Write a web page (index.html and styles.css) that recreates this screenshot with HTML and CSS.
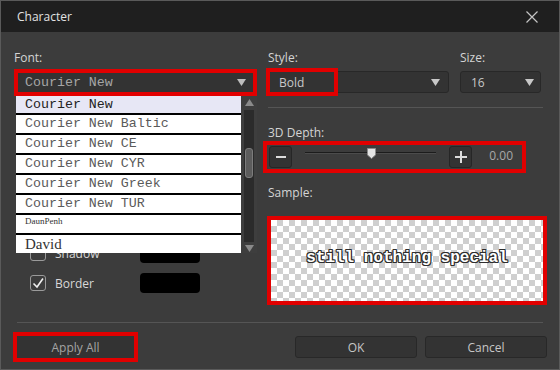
FILE: index.html
```html
<!DOCTYPE html>
<html lang="en">
  <head>
    <meta charset="UTF-8" />
    <meta name="viewport" content="width=device-width, initial-scale=1.0" />
    <title>Character</title>
    <link rel="stylesheet" href="styles.css">
  </head>
  <body>
    <div class="window">
      <div class="titlebar">
        <span class="title">Character</span>
        <svg class="close" width="12" height="12" viewBox="0 0 12 12">
          <path d="M0.5 0.5L11.5 11.5M11.5 0.5L0.5 11.5" stroke="#c4c4c4" stroke-width="1.2" fill="none" />
        </svg>
      </div>

      <div class="content">
        <div class="columns">
          <div class="col-left">
            <div class="label">Font:</div>
            <div class="font-field">
              <div class="combo combo-font">
                <span>Courier New</span>
                <svg class="arrow" width="9" height="7" viewBox="0 0 9 7"><polygon points="0,0 9,0 4.5,7" fill="#bdbdbd" /></svg>
              </div>
              <div class="font-list">
                <div class="items">
                  <div class="item selected">Courier New</div>
                  <div class="item">Courier New Baltic</div>
                  <div class="item">Courier New CE</div>
                  <div class="item">Courier New CYR</div>
                  <div class="item">Courier New Greek</div>
                  <div class="item">Courier New TUR</div>
                  <div class="item item-daun">DaunPenh</div>
                  <div class="item item-david">David</div>
                </div>
                <div class="scrollbar">
                  <svg class="scroll-arrow" width="9" height="7" viewBox="0 0 9 7"><polygon points="4.5,0 9,7 0,7" fill="#8a8a8a" /></svg>
                  <div class="scroll-track"><div class="scroll-thumb"></div></div>
                  <svg class="scroll-arrow" width="9" height="7" viewBox="0 0 9 7"><polygon points="0,0 9,0 4.5,7" fill="#8a8a8a" /></svg>
                </div>
              </div>
            </div>

            <div class="effects">
              <div class="effect-row">
                <span class="check"></span>
                <span class="effect-name">Shadow</span>
                <span class="swatch"></span>
              </div>
              <div class="effect-row">
                <span class="check">
                  <svg width="14" height="14" viewBox="0 0 14 14"><polyline points="2.5,7.5 6,11 12,2.5" stroke="#f0f0f0" stroke-width="1.6" fill="none" /></svg>
                </span>
                <span class="effect-name">Border</span>
                <span class="swatch"></span>
              </div>
            </div>
          </div>

          <div class="col-right">
            <div class="style-size">
              <div class="field style-field">
                <div class="label">Style:</div>
                <div class="combo combo-style">
                  <span>Bold</span>
                  <svg class="arrow" width="9" height="7" viewBox="0 0 9 7"><polygon points="0,0 9,0 4.5,7" fill="#c8c8c8" /></svg>
                  <div class="highlight"></div>
                </div>
              </div>
              <div class="field size-field">
                <div class="label">Size:</div>
                <div class="combo combo-size">
                  <span>16</span>
                  <svg class="arrow" width="9" height="7" viewBox="0 0 9 7"><polygon points="0,0 9,0 4.5,7" fill="#c8c8c8" /></svg>
                </div>
              </div>
            </div>

            <div class="sep"></div>

            <div class="label depth-label">3D Depth:</div>
            <div class="depth-row">
              <div class="step-btn">
                <svg width="12" height="12" viewBox="0 0 12 12"><path d="M1 6H11" stroke="#dcdcdc" stroke-width="2" /></svg>
              </div>
              <div class="slider">
                <div class="track"></div>
                <svg class="thumb" width="9" height="11" viewBox="0 0 9 11"><polygon points="0.5,0.5 8.5,0.5 8.5,7 4.5,10.5 0.5,7" fill="#e4e4e4" stroke="#8c8c8c" /></svg>
              </div>
              <div class="step-btn">
                <svg width="14" height="14" viewBox="0 0 14 14"><path d="M1 7H13M7 1V13" stroke="#dcdcdc" stroke-width="2" /></svg>
              </div>
              <span class="depth-value">0.00</span>
            </div>

            <div class="label sample-label">Sample:</div>
            <div class="sample">
              <span class="sample-text">still nothing special</span>
            </div>
          </div>
        </div>

        <div class="sep bottom-sep"></div>

        <div class="buttons">
          <div class="apply-frame"><button class="btn apply">Apply All</button></div>
          <button class="btn ok">OK</button>
          <button class="btn cancel">Cancel</button>
        </div>
      </div>
    </div>
  </body>
</html>
```

FILE: styles.css
```css
* {
  margin: 0;
  padding: 0;
  box-sizing: border-box;
}

body {
  background-color: #3c3c3c;
  font-family: "Open Sans", "Noto Sans", sans-serif;
  font-size: 12px;
  color: #d4d4d4;
}

.window {
  width: 560px;
  height: 370px;
  border: 1px solid #5a5a5a;
  background-color: #3c3c3c;
}

.titlebar {
  height: 31px;
  background-color: #1f1f1f;
  display: flex;
  align-items: center;
  justify-content: space-between;
  padding: 0 21px 0 16px;
}

.title {
  color: #e2e2e2;
  font-size: 12px;
}

.content {
  padding: 18px 12px 0 13px;
}

.columns {
  display: flex;
  gap: 6px;
  height: 255px;
}

.col-left {
  width: 243px;
}

.col-right {
  width: 284px;
}

.label {
  height: 16px;
  line-height: 16px;
}

/* combos */
.combo {
  display: flex;
  align-items: center;
  justify-content: space-between;
  background-color: #333;
  color: #c8c8c8;
}

.font-field {
  position: relative;
  margin-top: 3px;
}

.combo-font {
  height: 27px;
  border: 4px solid #e10000;
  padding: 0 7px;
  font-family: "Liberation Mono", monospace;
  font-size: 13.3px;
  color: #a6a6a6;
}

.font-list {
  position: absolute;
  top: 27px;
  left: 2px;
  width: 241px;
  height: 157px;
  display: flex;
  z-index: 2;
}

.items {
  width: 225px;
}

.item {
  height: 20px;
  line-height: 18px;
  border-bottom: 2px solid #000;
  background-color: #fff;
  padding-left: 9px;
  font-family: "Liberation Mono", monospace;
  font-size: 13.3px;
  color: #5a5a5a;
  white-space: nowrap;
}

.item.selected {
  height: 19px;
  line-height: 17px;
  background-color: #e7e7f5;
  color: #222;
}

.item-daun {
  font-family: "Liberation Serif", serif;
  font-size: 9px;
  line-height: 12px;
  color: #333;
}

.item-david {
  height: 18px;
  border-bottom: none;
  font-family: "Liberation Serif", serif;
  font-size: 15px;
  color: #333;
}

.scrollbar {
  width: 16px;
  background-color: #3e3e3e;
  display: flex;
  flex-direction: column;
  align-items: center;
  padding: 3px 0 1px;
}

.scroll-arrow {
  flex: none;
}

.scroll-track {
  flex: 1;
  width: 10px;
  margin: 4px 0 3px;
  background-color: #2b2b2b;
  padding: 38px 1px 0;
}

.scroll-thumb {
  height: 30px;
  background-color: #5c5c5c;
  border: 1px solid #7c7c7c;
  border-radius: 3px;
}

.effects {
  margin-top: 147px;
  padding-left: 16px;
  display: flex;
  flex-direction: column;
  gap: 10px;
}

.effect-row {
  display: flex;
  align-items: center;
  height: 20px;
}

.check {
  width: 16px;
  height: 16px;
  border: 1px solid #9a9a9a;
  border-radius: 3px;
  margin-right: 9px;
  display: flex;
  align-items: center;
  justify-content: center;
}

.effect-name {
  width: 85px;
  color: #d8d8d8;
}

.swatch {
  width: 60px;
  height: 20px;
  background-color: #000;
  border-radius: 4px;
}

/* right side */
.style-size {
  display: flex;
  gap: 11px;
  padding-left: 5px;
}

.field .label {
  margin-bottom: 5px;
}

.style-field {
  width: 181px;
}

.size-field {
  width: 81px;
}

.combo-style,
.combo-size {
  position: relative;
  height: 22px;
  border: 1px solid #282828;
  border-radius: 3px;
  padding: 0 8px 0 10px;
}

.combo-size {
  padding-right: 6px;
}

.highlight {
  position: absolute;
  left: -3px;
  top: -4px;
  width: 72px;
  height: 28px;
  border: 4px solid #e10000;
}

.sep {
  height: 1px;
  background-color: #555;
  margin: 14px 4px 0 5px;
}

.depth-label,
.sample-label {
  padding-left: 5px;
}

.depth-label {
  margin-top: 17px;
}

.depth-row {
  width: 263px;
  height: 32px;
  border: 4px solid #e10000;
  padding: 0 9px 0 2px;
  display: flex;
  align-items: center;
}

.step-btn {
  width: 23px;
  height: 22px;
  background-color: #333;
  border: 1px solid #262626;
  border-radius: 3px;
  display: flex;
  align-items: center;
  justify-content: center;
}

.slider {
  position: relative;
  width: 131px;
  height: 24px;
  margin: 0 13px;
}

.track {
  margin-top: 7px;
  height: 2px;
  border-top: 1px solid #1c1c1c;
  border-bottom: 1px solid #4c4c4c;
}

.thumb {
  position: absolute;
  left: 62px;
  top: 3px;
}

.depth-value {
  margin-left: auto;
  color: #a8a8a8;
  margin-bottom: 3px;
}

.sample-label {
  margin-top: 12px;
}

.sample {
  margin: 15px 0 0 4px;
  width: 280px;
  height: 89px;
  border: 4px solid #e10000;
  background-color: #fff;
  background-image:
    linear-gradient(45deg, #cfcfcf 25%, transparent 25%, transparent 75%, #cfcfcf 75%),
    linear-gradient(45deg, #cfcfcf 25%, transparent 25%, transparent 75%, #cfcfcf 75%);
  background-size: 12px 12px;
  background-position: 0 0, 6px 6px;
  display: flex;
  align-items: center;
  justify-content: center;
  padding-bottom: 5px;
}

.sample-text {
  font-family: "Liberation Mono", monospace;
  font-weight: bold;
  font-size: 16px;
  color: #fff;
  text-shadow:
    1px 0 #2e2e2e, -1px 0 #2e2e2e, 0 1px #2e2e2e, 0 -1px #2e2e2e,
    1px 1px #2e2e2e, -1px -1px #2e2e2e, 1px -1px #2e2e2e, -1px 1px #2e2e2e;
}

/* bottom */
.bottom-sep {
  margin: 17px 4px 0 3px;
}

.buttons {
  display: flex;
  align-items: center;
  gap: 8px;
  margin-top: 9px;
}

.apply-frame {
  width: 125px;
  height: 30px;
  margin-left: -1px;
  border: 4px solid #e10000;
}

.btn {
  font-family: "Open Sans", "Noto Sans", sans-serif;
  font-size: 12px;
  background-color: #333;
  border: 1px solid #282828;
  border-radius: 3px;
  color: #c6c6c6;
  height: 22px;
  width: 122px;
}

.apply {
  width: 100%;
  height: 100%;
  border: none;
  border-radius: 0;
  color: #a4a4a4;
}

.ok {
  margin-left: auto;
}
```
